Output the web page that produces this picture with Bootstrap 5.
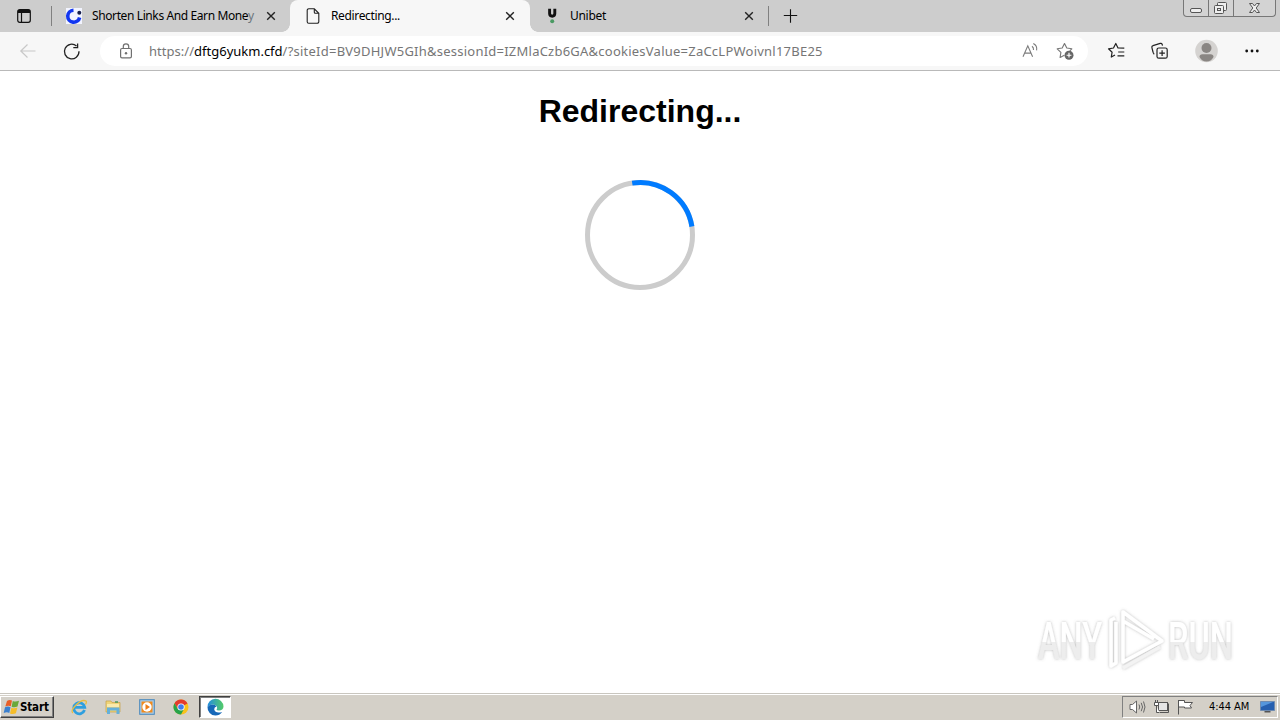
<!DOCTYPE html>
<html lang="en">
<head>
  <meta charset="UTF-8" />
  <meta name="viewport" content="width=device-width, initial-scale=1" />
  <title>Redirecting...</title>
  <link
    href="https://cdn.jsdelivr.net/npm/bootstrap@5.3.0/dist/css/bootstrap.min.css"
    rel="stylesheet"
  />
  <style>
    body { height: 720px; font-family: "Noto Sans", "Open Sans", sans-serif; font-size: 12px; line-height: 16px; color: #000; }
    svg { display: block; flex: none; fill: none; overflow: visible; }

    /* tab strip */
    .tabstrip { height: 32px; background: #cdcdcd; }
    .workspace { width: 51px; padding-left: 16px; }
    .divider { width: 1px; height: 20px; background: #808080; }
    .tab { width: 239px; padding: 0 12px 0 14px; }
    .tab-first { width: 238px; }
    .tab-last { width: 238px; padding-left: 15px; padding-right: 12px; }
    .tab-active { width: 240px; background: #f7f7f7; border-radius: 8px 8px 0 0; padding-left: 15px; padding-right: 13px; }
    .tab-active::before, .tab-active::after { content: ""; position: absolute; bottom: 0; width: 8px; height: 8px; }
    .tab-active::before { left: -8px; background: radial-gradient(circle at 0 0, #cdcdcd 7.5px, #f7f7f7 8px); }
    .tab-active::after { right: -8px; background: radial-gradient(circle at 100% 0, #cdcdcd 7.5px, #f7f7f7 8px); }
    .tab-title { white-space: nowrap; margin-left: 10px; }
    .title-long { letter-spacing: -.39px; }
    .title-active { letter-spacing: -.35px; }
    .title-last { letter-spacing: -.3px; margin-left: 9px; }
    .new-tab { margin-left: 15px; }
    .window-buttons { width: 93px; height: 17px; margin-right: 4px; border: 1px solid #777; border-top: 0; border-radius: 0 0 4px 4px; background: #d3d3d3; }
    .window-buttons > div { width: 25px; }
    .window-buttons > div + div { border-left: 1px solid #777; }
    .window-buttons > .win-close { width: 42px; }

    /* toolbar */
    .toolbar { height: 39px; background: #f7f7f7; border-bottom: 1px solid #b9b9b9; padding: 0 20px; }
    .reload { margin-left: 25px; }
    .omnibox { width: 988px; height: 30px; margin-left: 19px; border-radius: 15px; background: #fff; padding: 0 12px 0 18px; }
    .address { font-size: 13px; color: #767676; margin-left: 15px; white-space: nowrap; letter-spacing: .03px; }
    .address .domain { color: #000; letter-spacing: 0; }
    .address .query { letter-spacing: .235px; }

    /* page */
    .heading { font: bold 32px/37px "Liberation Sans", Arial, sans-serif; margin: 22px 0 0; letter-spacing: 0; }
    .loader { margin-top: 50px; }
    .watermark { right: 40px; bottom: 16px; }

    /* taskbar */
    .taskbar { height: 27px; background: #d4d0c8; border-top: 1px solid #c9c6bf; box-shadow: inset 0 1px #fff; }
    .start-btn { width: 54px; height: 22px; padding-left: 3px; border: 1px solid; border-color: #fff #404040 #404040 #fff; box-shadow: inset -1px -1px #808080; font: bold 11.5px/16px "DejaVu Sans Condensed", "DejaVu Sans", sans-serif; letter-spacing: -.15px; }
    .quick { margin-left: 17px; gap: 18px; }
    .task-open { width: 32px; height: 22px; margin-left: 10px; border: 1px solid; border-color: #404040 #fff #fff #404040; background: #fff; box-shadow: inset 1px 1px #808080; }
    .tray { width: 156px; height: 22px; margin: 0 2px 0 auto; padding: 0 1px 0 6px; border: 1px solid; border-color: #808080 #fff #fff #808080; }
    .clock { font: 11px/16px "DejaVu Sans Condensed", "DejaVu Sans", sans-serif; letter-spacing: -.05px; white-space: nowrap; width: 42px; margin-left: 14px; }
  </style>
</head>
<body class="d-flex flex-column bg-white overflow-hidden">

  <header>
    <div class="tabstrip d-flex align-items-center">
      <div class="workspace">
        <svg width="16" height="16" stroke="#111" stroke-width="1.2"><rect x="1.7" y="1.7" width="12.6" height="12.6" rx="2"/><path d="M2 3.5h12" stroke-width="3"/><path d="M5.5 4v10"/></svg>
      </div>
      <div class="divider"></div>
      <div class="tab tab-first d-flex align-items-center">
        <svg width="16" height="16"><path fill="#f2f4ff" d="M0 0h16v16H0z"/><path d="M7.5 2.2a6 6 0 1 0 6.1 7.3" stroke="#1236f0" stroke-width="3.6"/><circle cx="13.3" cy="4.7" r="2" fill="#17204d"/></svg>
        <span class="tab-title title-long">Shorten Links And Earn Mone<span class="text-secondary">y</span></span>
        <svg class="ms-auto" width="14" height="14" stroke="#222" stroke-width="1.4"><path d="M3.2 3.2l7.6 7.6M10.8 3.2l-7.6 7.6"/></svg>
      </div>
      <div class="tab tab-active position-relative h-100 d-flex align-items-center">
        <svg width="16" height="16" stroke="#222" stroke-width="1.1"><path d="M9.3.8H3.7a1.5 1.5 0 0 0-1.5 1.5v11.4a1.5 1.5 0 0 0 1.5 1.5h8.6a1.5 1.5 0 0 0 1.5-1.5V5.3zM9.3.8v3.5a1 1 0 0 0 1 1h3.5"/></svg>
        <span class="tab-title title-active">Redirecting...</span>
        <svg class="ms-auto" width="14" height="14" stroke="#222" stroke-width="1.4"><path d="M3.2 3.2l7.6 7.6M10.8 3.2l-7.6 7.6"/></svg>
      </div>
      <div class="tab tab-last d-flex align-items-center">
        <svg width="16" height="16"><path d="M4.6.8v4.8a2.6 2.6 0 0 0 5.2 0v-4.8" stroke="#111" stroke-width="2.9"/><circle cx="7.2" cy="13.3" r="2" fill="#4a9a63"/></svg>
        <span class="tab-title title-last">Unibet</span>
        <svg class="ms-auto" width="14" height="14" stroke="#222" stroke-width="1.4"><path d="M3.2 3.2l7.6 7.6M10.8 3.2l-7.6 7.6"/></svg>
      </div>
      <div class="divider"></div>
      <svg class="new-tab" width="14" height="14" stroke="#111" stroke-width="1.1"><path d="M6.5.3v13.4M-.2 6.5h13.4"/></svg>
      <div class="window-buttons d-flex align-self-start ms-auto">
        <div><svg width="24" height="16"><rect x="6.5" y="8.5" width="11" height="4" rx="1.5" fill="#eee" stroke="#555"/></svg></div>
        <div><svg width="24" height="16"><g fill="#eee" stroke="#555"><rect x="8.5" y="2.5" width="9" height="8" rx="1"/><rect x="5.5" y="5.5" width="9" height="8" rx="1"/><rect x="8.5" y="8.5" width="3" height="2"/></g></svg></div>
        <div class="win-close"><svg width="41" height="16"><path d="M15.500 3.500h3l2 2.500 2-2.500h3l-3.300 4.500 3.300 4.500h-3l-2-2.500-2 2.500h-3l3.300-4.500z" fill="#eee" stroke="#555"/></svg></div>
      </div>
    </div>

    <div class="toolbar d-flex align-items-center">
      <svg width="16" height="16" stroke="#c8c8c8" stroke-width="1.2"><path d="M15.500 8H.8M7.500 1.500L.8 8l6.700 6.500"/></svg>
      <svg class="reload" width="20" height="20" viewBox="-2 -2 20 20" stroke="#222" stroke-width="1.3"><path d="M13.500 3A7.300 7.300 0 1 0 16 8.300M14.600.4v4.300h-4.300"/></svg>
      <div class="omnibox d-flex align-items-center">
        <svg width="16" height="16" stroke="#707070" stroke-width="1.2"><rect x="2.6" y="5.5" width="10.8" height="9.4" rx="1.4"/><path d="M5.300 5.500V3.500a2.700 2.700 0 0 1 5.400 0v2"/><circle cx="8" cy="10.2" r="1.2" fill="#707070" stroke="none"/></svg>
        <div class="address">https://<span class="domain">dftg6yukm.cfd</span><span class="query">/?siteId=BV9DHJW5GIh&amp;sessionId=IZMlaCzb6GA&amp;cookiesValue=ZaCcLPWoivnl17BE25</span></div>
        <svg class="ms-auto" width="18" height="18" stroke="#7c7c7c" stroke-width="1.1"><path d="M1 14.800L5.800 3.800l4.800 11M2.700 11.100h6.200M10 4.200q1.800 1.400 1.500 3.800M11.300 1.400q4.200 2.200 3.300 7"/></svg>
        <svg class="ms-3" width="20" height="18" stroke="#777" stroke-width="1.15"><path d="M8.300 13.200l-4.200 2.300.8-5.100L1.200 6.800l5-.8L8.500 1.500 10.800 6l5 .8-2 2" stroke-linejoin="round"/><circle cx="13" cy="13.2" r="4.5" fill="#666" stroke="none"/><path d="M13 10.800v4.800M10.600 13.200h4.800" stroke="#fff"/></svg>
      </div>
      <div class="d-flex align-items-center flex-grow-1 justify-content-between ps-3">
        <svg class="ms-1" width="18" height="18" stroke="#222" stroke-width="1.2" stroke-linejoin="round"><path d="M7 13l-3.700 2 .8-4.800L.5 6.800l5-.8L7.800 1.500 10 6l6.300.2M10.200 10h6.100M9.500 13.800h6.800"/></svg>
        <svg width="18" height="18" stroke="#222" stroke-width="1.2"><path d="M3.300 12.300Q2.300 11.500 2 10L.9 5.600Q.5 4 2 3.600L9.200 1.400q1.500-.4 2 1l.3 1.300"/><rect x="6" y="6" width="10.2" height="10.2" rx="1.8"/><path d="M11.100 8.300v5.600M8.300 11.100h5.600"/></svg>
        <svg width="24" height="24"><circle cx="11.5" cy="12" r="11.3" fill="#d5d3d1"/><circle cx="11.5" cy="9" r="5" fill="#8a8683"/><path d="M4.500 18q0-2.700 3-2.700h8q3 0 3 2.700-2.500 4.500-7 4.500t-7-4.500z" fill="#8a8683"/></svg>
        <svg width="16" height="16"><g fill="#111"><circle cx="2.7" cy="8" r="1.4"/><circle cx="8" cy="8" r="1.4"/><circle cx="13.3" cy="8" r="1.4"/></g></svg>
      </div>
    </div>
  </header>

  <main class="position-relative flex-grow-1 d-flex flex-column align-items-center">
    <h1 class="heading">Redirecting...</h1>
    <svg class="loader" width="110" height="110" stroke-width="5"><circle cx="55" cy="55" r="52.5" stroke="#ccc"/><path d="M47.200 3.100A52.500 52.500 0 0 1 106.900 46.500" stroke="#007bff"/></svg>

    <svg class="watermark position-absolute" width="210" height="70">
      <defs>
        <linearGradient id="fade" x1="0" y1="0" x2="0" y2="1"><stop offset=".5" stop-color="#fff"/><stop offset=".51" stop-color="#ededed"/></linearGradient>
        <filter id="soft" x="-20%" y="-20%" width="140%" height="140%"><feDropShadow dx="0" dy="0" stdDeviation="1.8" flood-color="#777" flood-opacity=".5"/></filter>
      </defs>
      <g filter="url(#soft)">
        <g fill="url(#fade)" font-family="Roboto, sans-serif" font-weight="500" font-size="52">
          <text x="8" y="52" textLength="64" lengthAdjust="spacingAndGlyphs">ANY</text>
          <text x="138" y="52" textLength="65" lengthAdjust="spacingAndGlyphs">RUN</text>
        </g>
        <g stroke="#fff" stroke-width="3.5" stroke-linejoin="round">
          <path d="M85 11l-4 2v46l5-3V15M93 5v50l39-21zM93 14l31 18"/>
          <path d="M93 61l37-21" stroke="#f3f3f3"/>
        </g>
      </g>
    </svg>
  </main>

  <footer class="taskbar d-flex align-items-center">
    <div class="start-btn d-flex align-items-center">
      <svg width="16" height="16"><path fill="#e85e27" d="M3 2q2.500-1.800 5-.5L6.800 7.200Q4.500 6 1.300 7.500z"/><path fill="#69a83b" d="M8.800 2q2.600 1.300 6.200-.2L13.500 7.500Q10.300 9 7.600 7.700z"/><path fill="#3b80cf" d="M1 8.300Q4 7 6.500 8.200L5.300 14Q3 12.700-.3 14z"/><path fill="#f5bd29" d="M7.400 8.700q2.600 1.300 6-.2l-1.500 5.800Q9 15.700 6 14.500z"/></svg>Start
    </div>
    <div class="quick d-flex align-items-center">
      <svg width="16" height="16"><path d="M13.500 11A5.500 5.500 0 1 1 13.700 8.300H4" stroke="#2e9fdf" stroke-width="2.8"/><path d="M2 14Q-1 12 5 6T15 2q1 1-.5 3.500" stroke="#e8bd42" stroke-width="1.3"/></svg>
      <svg width="16" height="16"><path fill="#efd47a" stroke="#c5a146" stroke-width=".7" d="M1 2h5l1 1.500h8V13H1z"/><path fill="#f9eaac" d="M2 5h12v3H2z"/><path fill="#64b0da" d="M2 8.500h12.500v6.500H11.500V11.500H5V15H2z"/><path d="M10 3h3" stroke="#4b9a5c" stroke-width="1.5"/></svg>
      <svg width="16" height="16"><rect x=".7" y=".7" width="14.6" height="14.6" fill="#a9cce8" stroke="#4887bc"/><rect x="2.5" y="2.5" width="11" height="11" fill="#f08a1d"/><circle cx="8" cy="8" r="4.7" fill="#fff"/><path fill="#ed7c16" d="M6.500 5v6l4.500-3z"/></svg>
      <svg width="16" height="16"><circle cx="8" cy="8" r="7.5" fill="#f8c21c"/><path fill="#e33b2e" d="M8 8l6.500-3.500A7.500 7.500 0 0 0 1.500 4.250L4.800 10z"/><path fill="#26a34a" d="M1.500 4.250A7.500 7.500 0 0 0 8 15.500L11 10 8 8 4.800 10z"/><circle cx="8" cy="8" r="3.6" fill="#fff"/><circle cx="8" cy="8" r="2.8" fill="#3f7ded"/></svg>
    </div>
    <div class="task-open d-flex align-items-center justify-content-center">
      <svg width="17" height="17"><defs><linearGradient id="wave"><stop stop-color="#238de0"/><stop offset="1" stop-color="#54cc67"/></linearGradient></defs><path fill="url(#wave)" d="M.5 8A8 8 0 0 1 16.500 7.500c0 2.900-2 4-4.500 4q-2.500 0-2.500-1Q10.500 9.500 10 8 9 5.500 5.500 5.500 2.500 5.500.5 8z"/><path fill="#1668b8" d="M.5 8Q2 5.500 5.500 5.500q3 0 4 2-2.300.5-2.300 2.800 1 4.500 8 2.700Q12.500 16.500 8.500 16.500A8 8 0 0 1 .5 8z"/></svg>
    </div>
    <div class="tray d-flex align-items-center">
      <svg width="17" height="16" stroke="#666"><path d="M1 5.500h2.500l4-3.500v12l-4-3.500H1z" fill="#fff"/><path d="M10 5.500q1.500 2.500 0 5M12.200 3.800q2.700 4.200 0 8.400M14.500 2.500q3 5.500 0 11"/></svg>
      <svg class="ms-2" width="16" height="16" stroke="#555"><rect x="4.5" y="3.5" width="9" height="8" fill="#e5e5e5"/><path d="M6 13.500h8.500v-9"/><path d="M1.500 1v3M3.500 1v3M.5 3.500h4v3h-4zM2.500 7v6.500h3" fill="#fff"/></svg>
      <svg class="ms-2" width="17" height="16" stroke="#555"><path d="M.5 1v14.500M.5 1.500h6v2h8l-2.500 3 1.500 2.500H6.500v-1h-6" fill="#fff"/></svg>
      <div class="clock">4:44 AM</div>
      <svg class="ms-auto" width="16" height="16"><path fill="#265faf" stroke="#6f8bb0" d="M.5 2.500h14v9h-14z"/><path fill="#5596dc" d="M1 3h12L1 8z"/><path fill="#555" d="M4.500 12h6v1.500h-6z"/></svg>
    </div>
  </footer>

  <script src="https://cdn.jsdelivr.net/npm/bootstrap@5.3.0/dist/js/bootstrap.bundle.min.js"></script>
</body>
</html>
